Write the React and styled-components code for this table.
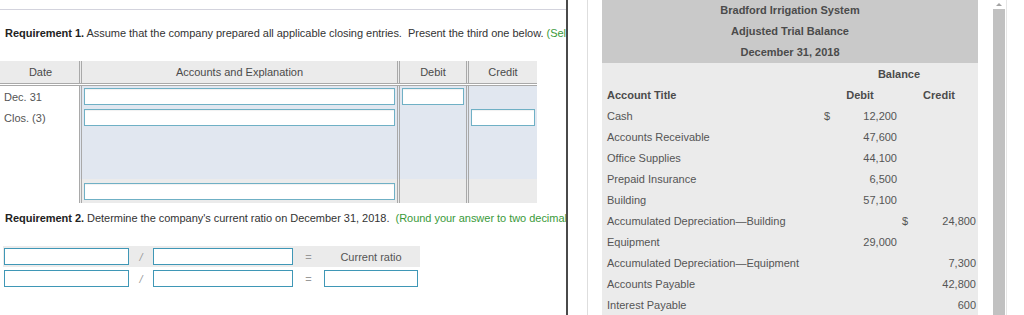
import React from "react";
import styled, { createGlobalStyle } from "styled-components";

const GlobalStyle = createGlobalStyle`
  html, body { margin: 0; padding: 0; background: #fff; }
  body {
    font-family: "Liberation Sans", Arial, sans-serif;
    font-size: 11px;
    color: #333;
  }
  * { box-sizing: border-box; }
`;

const Page = styled.div`
  display: flex;
  width: 1024px;
  height: 315px;
  overflow: hidden;
`;

/* ---------- left: question panel ---------- */

const LeftPanel = styled.div`
  width: 566px;
  flex: none;
  overflow: hidden;
`;

const TopRule = styled.div`
  height: 10px;
  border-bottom: 1px solid #d3d3dd;
`;

const Prompt = styled.div`
  white-space: nowrap;
  overflow: hidden;
  line-height: 14px;
  padding-left: 5px;
  letter-spacing: -0.03px;
  margin-top: ${(p) => p.$top}px;
  color: #333;

  b { color: #222; }
  span { color: #3a9a3a; }
`;

const Journal = styled.div`
  margin-top: 21px;
  width: 537px;
`;

const JRow = styled.div`
  display: grid;
  grid-template-columns: 79px 318px 69px 71px;
  height: ${(p) => p.$h}px;
  ${(p) => p.$head && "border-bottom: 3px double #a9a9a9; height: 25px;"}
`;

const tones = {
  head: "#ebebeb",
  blue: "#e1e7f0",
  gray: "#ebebeb",
  white: "#fff",
};

const JCell = styled.div`
  display: flex;
  align-items: center;
  justify-content: ${(p) => (p.$center ? "center" : "flex-start")};
  padding: 0 2px;
  background: ${(p) => tones[p.$tone || "white"]};
  border-left: ${(p) => (p.$first ? "none" : "3px double #a9a9a9")};
  color: ${(p) => (p.$tone === "head" ? "#4a4a4a" : "#555")};
  ${(p) => p.$first && "padding-left: 4px;"}
`;

const JInput = styled.div`
  width: 100%;
  height: 17px;
  background: #fff;
  border: 1px solid #6fb0c5;
  box-shadow: inset 0 1px 1px rgba(0, 0, 0, 0.06);
`;

const RatioBox = styled.div`
  margin: 21px 0 0 3px;
  width: 417px;
`;

const RatioRow = styled.div`
  display: grid;
  grid-template-columns: 125px 24px 140px 31px 94px;
  align-items: center;
  height: ${(p) => (p.$shaded ? 21 : 23)}px;
  padding: 0 2px 0 1px;
  background: ${(p) => (p.$shaded ? "#ebebeb" : "transparent")};
`;

const RInput = styled.div`
  height: 17px;
  background: #fff;
  border: 1px solid #3f97b6;
`;

const Sym = styled.div`
  text-align: center;
  color: #999;
  ${(p) => p.$slash && "font-style: italic;"}
`;

const RatioLabel = styled.div`
  text-align: center;
  color: #555;
`;

/* ---------- divider ---------- */

const Divider = styled.div`
  width: 2px;
  flex: none;
  background: #4a4a4a;
  box-shadow: -5px 0 6px -1px rgba(0, 0, 0, 0.22);
  position: relative;
  z-index: 1;
`;

/* ---------- right: data popup ---------- */

const RightPanel = styled.div`
  flex: 1;
  display: flex;
  padding-left: 19px;
`;

const Frame = styled.div`
  border-left: 1px solid #dedede;
  padding-left: 14px;
  display: flex;
`;

const Trial = styled.div`
  width: 376px;
  color: #555;
`;

const TrialHead = styled.div`
  background: #c9c9c9;
`;

const TitleLine = styled.div`
  height: 21px;
  line-height: 21px;
  text-align: center;
  font-weight: bold;
  color: #4b4b4b;
`;

const TrialBody = styled.div`
  background: #ebebeb;
  padding-bottom: 10px;
`;

const TRow = styled.div`
  display: grid;
  grid-template-columns: 218px 80px 78px;
  height: 21px;
  align-items: center;
  font-weight: ${(p) => (p.$bold ? "bold" : "normal")};
  color: ${(p) => (p.$bold ? "#4b4b4b" : "#555")};
`;

const TTitle = styled.div`
  padding-left: 5px;
  white-space: nowrap;
`;

const TSpan = styled.div`
  grid-column: 2 / 4;
  text-align: center;
`;

const THead = styled.div`
  text-align: center;
`;

const Amount = styled.div`
  display: flex;
  justify-content: space-between;
  padding: ${(p) => (p.$credit ? "0 2px 0 2px" : "0 3px 0 4px")};
`;

const Scroll = styled.div`
  margin-left: 13px;
  width: 16px;
  flex: none;
  display: flex;
  flex-direction: column;
  align-items: center;
  border-right: 1px solid #e6e6e6;
`;

const Arrow = styled.div`
  margin-top: 3px;
  width: 0;
  height: 0;
  border-left: 3px solid transparent;
  border-right: 3px solid transparent;
  border-bottom: 3px solid #a3a3a3;
`;

const Thumb = styled.div`
  margin-top: 3px;
  width: 12px;
  flex: 1;
  background: #c1c1c1;
`;

const rows = [
  ["Cash", "$", "12,200", "", ""],
  ["Accounts Receivable", "", "47,600", "", ""],
  ["Office Supplies", "", "44,100", "", ""],
  ["Prepaid Insurance", "", "6,500", "", ""],
  ["Building", "", "57,100", "", ""],
  ["Accumulated Depreciation\u2014Building", "", "", "$", "24,800"],
  ["Equipment", "", "29,000", "", ""],
  ["Accumulated Depreciation\u2014Equipment", "", "", "", "7,300"],
  ["Accounts Payable", "", "", "", "42,800"],
  ["Interest Payable", "", "", "", "600"],
];

export default function App() {
  return (
    <>
      <GlobalStyle />
      <Page>
        <LeftPanel>
          <TopRule />
          <Prompt $top={16}>
            <b>Requirement 1.</b> Assume that the company prepared all applicable closing entries.&nbsp; Present the third one below. <span>(Select the account, then enter the amounts.)</span>
          </Prompt>

          <Journal>
            <JRow $head>
              <JCell $first $tone="head" $center>Date</JCell>
              <JCell $tone="head" $center>Accounts and Explanation</JCell>
              <JCell $tone="head" $center>Debit</JCell>
              <JCell $tone="head" $center>Credit</JCell>
            </JRow>
            <JRow $h={21}>
              <JCell $first>Dec. 31</JCell>
              <JCell $tone="blue"><JInput /></JCell>
              <JCell $tone="blue"><JInput /></JCell>
              <JCell $tone="blue" />
            </JRow>
            <JRow $h={21}>
              <JCell $first>Clos. (3)</JCell>
              <JCell $tone="blue"><JInput /></JCell>
              <JCell $tone="blue" />
              <JCell $tone="blue"><JInput /></JCell>
            </JRow>
            <JRow $h={51}>
              <JCell $first />
              <JCell $tone="blue" />
              <JCell $tone="blue" />
              <JCell $tone="blue" />
            </JRow>
            <JRow $h={24}>
              <JCell $first />
              <JCell $tone="gray"><JInput /></JCell>
              <JCell $tone="gray" />
              <JCell $tone="gray" />
            </JRow>
          </Journal>

          <Prompt $top={8}>
            <b>Requirement 2.</b> Determine the company's current ratio on December 31, 2018.&nbsp; <span>(Round your answer to two decimal places, X.XX.)</span>
          </Prompt>

          <RatioBox>
            <RatioRow $shaded>
              <RInput />
              <Sym $slash>/</Sym>
              <RInput />
              <Sym>=</Sym>
              <RatioLabel>Current ratio</RatioLabel>
            </RatioRow>
            <RatioRow>
              <RInput />
              <Sym $slash>/</Sym>
              <RInput />
              <Sym>=</Sym>
              <RInput />
            </RatioRow>
          </RatioBox>
        </LeftPanel>

        <Divider />

        <RightPanel>
          <Frame>
            <Trial>
              <TrialHead>
                <TitleLine>Bradford Irrigation System</TitleLine>
                <TitleLine>Adjusted Trial Balance</TitleLine>
                <TitleLine>December 31, 2018</TitleLine>
              </TrialHead>
              <TrialBody>
                <TRow $bold>
                  <TTitle />
                  <TSpan>Balance</TSpan>
                </TRow>
                <TRow $bold>
                  <TTitle>Account Title</TTitle>
                  <THead>Debit</THead>
                  <THead>Credit</THead>
                </TRow>
                {rows.map(([title, ds, dv, cs, cv]) => (
                  <TRow key={title}>
                    <TTitle>{title}</TTitle>
                    <Amount>
                      <span>{ds}</span>
                      <span>{dv}</span>
                    </Amount>
                    <Amount $credit>
                      <span>{cs}</span>
                      <span>{cv}</span>
                    </Amount>
                  </TRow>
                ))}
              </TrialBody>
            </Trial>
            <Scroll>
              <Arrow />
              <Thumb />
            </Scroll>
          </Frame>
        </RightPanel>
      </Page>
    </>
  );
}
